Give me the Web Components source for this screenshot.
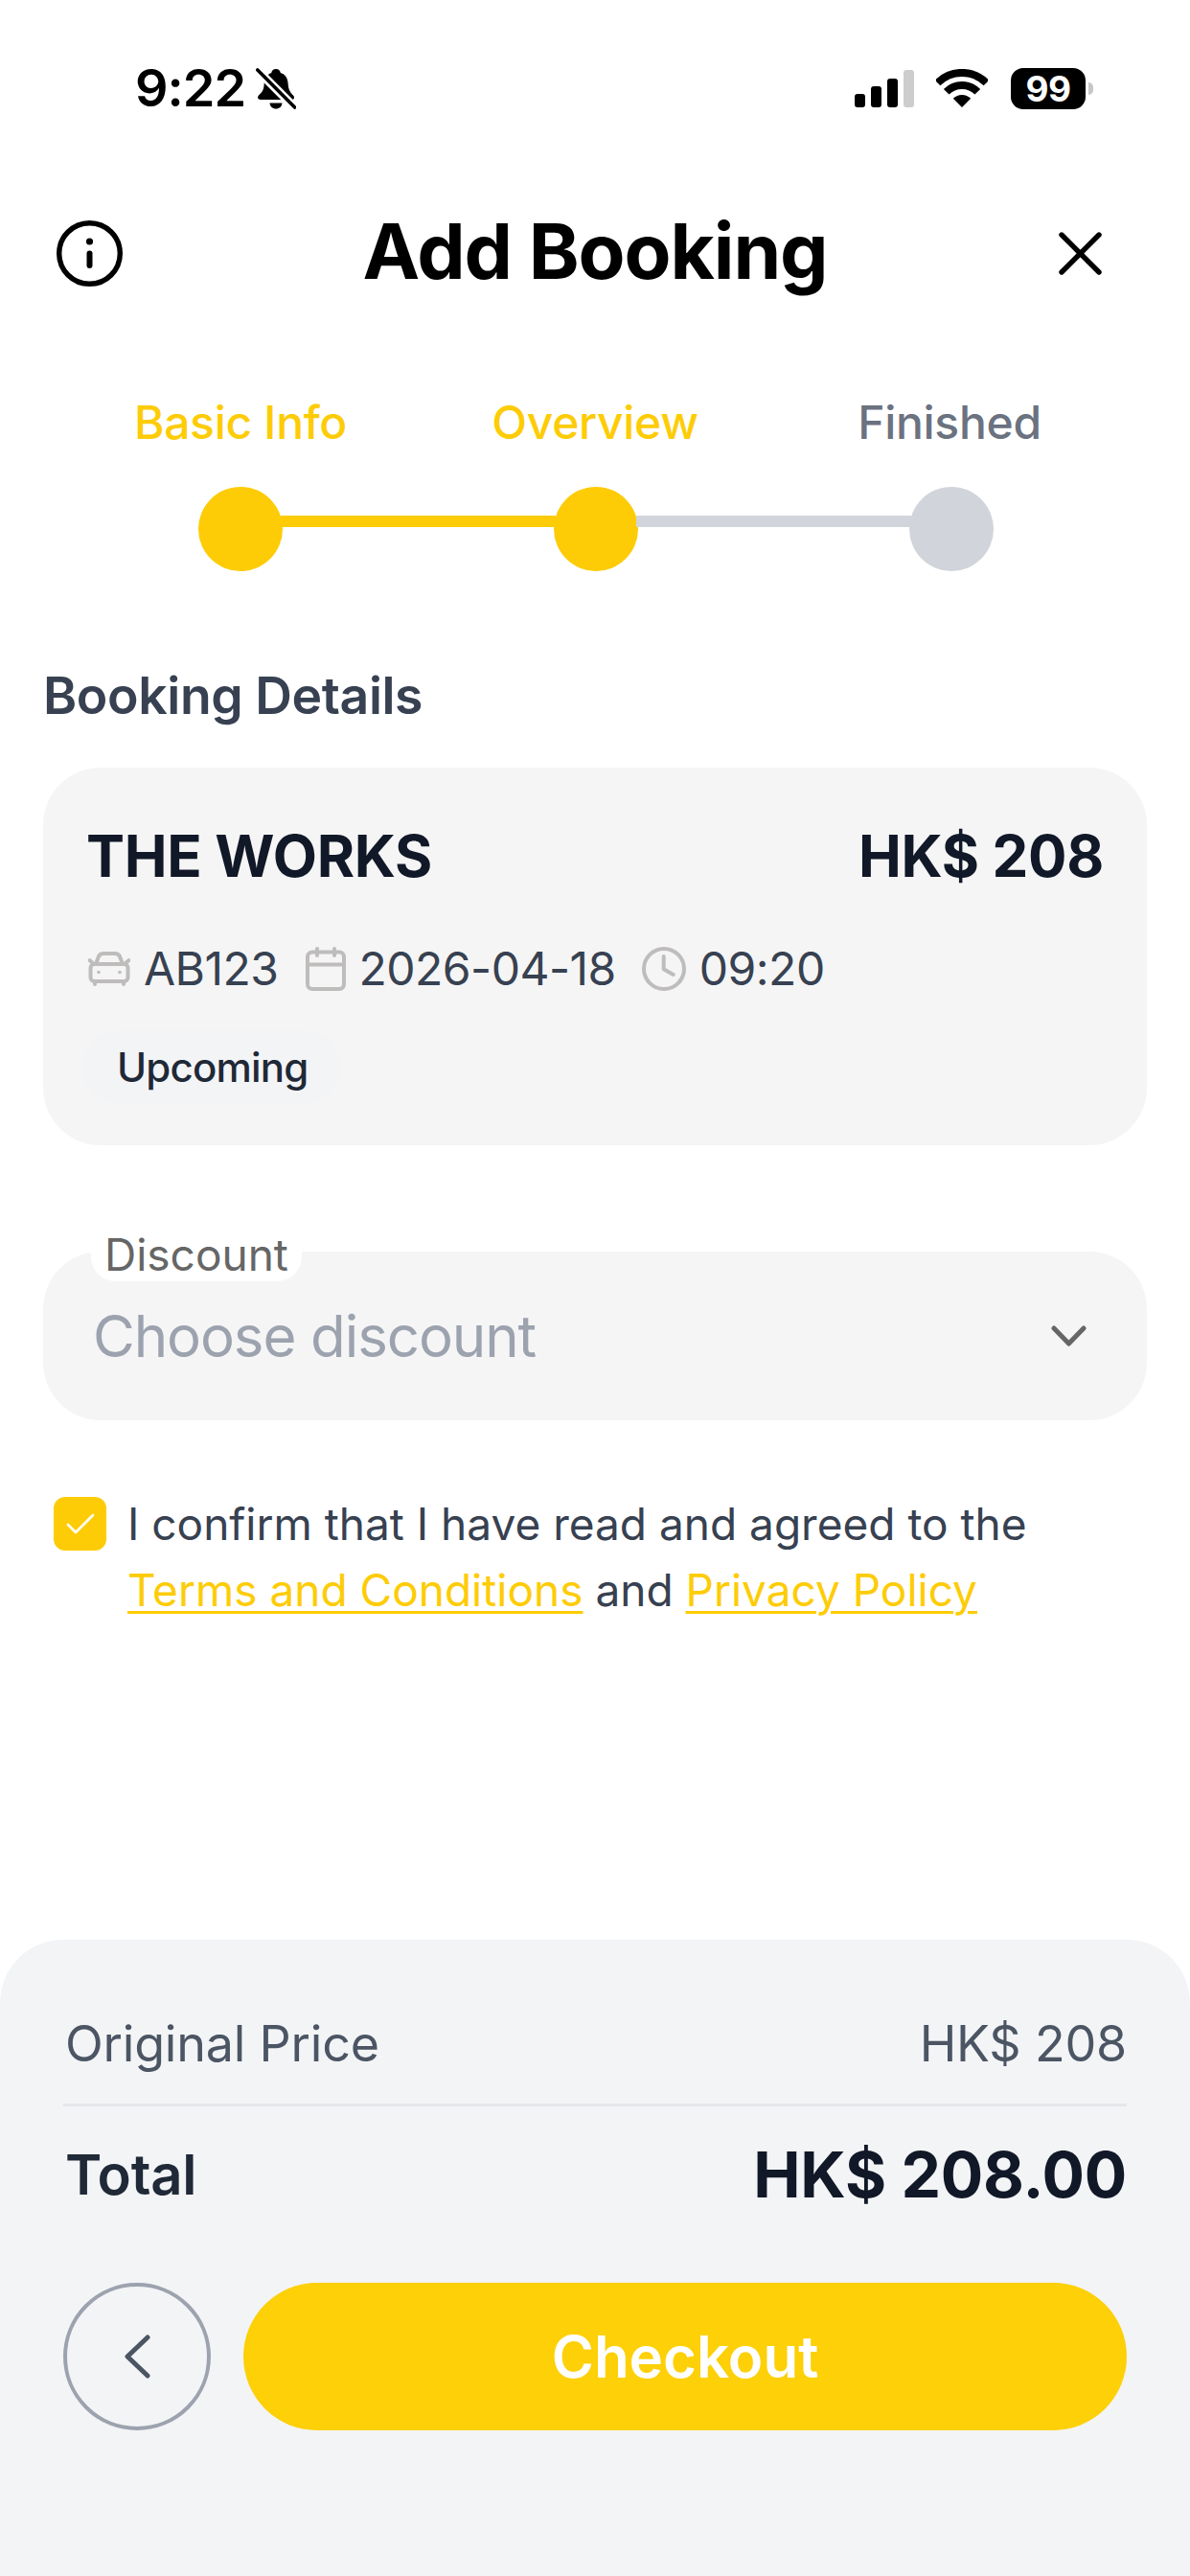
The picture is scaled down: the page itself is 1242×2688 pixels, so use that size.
<!DOCTYPE html>
<html lang="en"><head><meta charset="utf-8"><title>Add Booking</title>
<style>
html,body{margin:0;padding:0;background:#fff}
body{font-family:Inter,"Liberation Sans",sans-serif;-webkit-font-smoothing:antialiased}
</style></head><body>
<app-screen>
  <status-bar></status-bar>
  <nav-header>Add Booking</nav-header>
  <step-progress></step-progress>
  <section-title>Booking Details</section-title>
  <booking-card></booking-card>
  <select-field label="Discount" placeholder="Choose discount"></select-field>
  <agree-row></agree-row>
  <price-footer></price-footer>
</app-screen>
<script>
function def(name, html){
  customElements.define(name, class extends HTMLElement{
    constructor(){super();this.attachShadow({mode:'open'}).innerHTML=typeof html==='function'?html(this):html;}
    connectedCallback(){
      if(typeof html==='function'){this.shadowRoot.innerHTML=html(this);}
    }
  });
}
def('app-screen',`<style>:host{display:flex;flex-direction:column;width:1242px;height:2688px;overflow:hidden;background:#fff}</style><slot></slot>`);

def('status-bar',`<style>
:host{display:flex;align-items:center;height:184px;padding:0 101px 0 141px;box-sizing:border-box;justify-content:space-between;color:#000}
.l,.r{display:flex;align-items:center}
.t{font:600 54px/60px Inter,sans-serif;letter-spacing:-1px;margin-right:11px}
.sig{display:flex;align-items:flex-end;gap:6px;height:39px;margin-right:23px}
.sig i{display:block;width:11px;background:#000;border-radius:3px}
.bat{width:78px;height:43px;background:#000;border-radius:13px;color:#fff;font:700 37px/43px Inter,sans-serif;text-align:center;letter-spacing:-.5px;margin-left:24px}
.nub{width:5px;height:13px;background:#c6c6c6;border-radius:0 6px 6px 0;margin-left:3px}
svg{display:block}
</style>
<div class="l"><span class="t">9:22</span>
<svg width="42" height="43" viewBox="0 0 42 43"><path d="M21 1c3 0 4.500 2 4.800 4 5 1.500 7.500 5.500 7.800 11 .3 6 2 9 5.400 12.500 1.800 2 1.300 4.500-1.500 4.500H5c-3 0-3.800-2.500-1.800-4.700C7 25 8.500 22 8.700 16 9 11 11.500 7 16.300 5c.2-2 1.700-4 4.700-4z"/><path d="M14.500 36.500h13c-.3 3.800-3 6-6.500 6s-6.200-2.200-6.500-6z"/><path d="M1 1.500 41 41.500" stroke="#fff" stroke-width="9"/><path d="M1.800 2 40.600 41" stroke="#000" stroke-width="3.600" stroke-linecap="round"/></svg></div>
<div class="r"><div class="sig"><i style="height:14px"></i><i style="height:22px"></i><i style="height:30px"></i><i style="height:39px;background:#cdcdcd"></i></div>
<svg width="54" height="40" viewBox="0 0 54 40" style="margin-bottom:1px"><path d="M1.500 14.500A36 36 0 0 1 52.500 14.500M10.700 23.700A23 23 0 0 1 43.300 23.700" fill="none" stroke="#000" stroke-width="8"/><path d="M27 40 17.800 30.800A13 13 0 0 1 36.200 30.800Z"/></svg>
<span class="bat">99</span><span class="nub"></span></div>`);

def('nav-header',`<style>
:host{display:grid;grid-template-columns:1fr auto 1fr;align-items:center;height:100px;padding:0 59px;margin-top:30px;color:#000}
.h{font:700 80px/96px Inter,sans-serif;letter-spacing:-1.1px;padding-bottom:4px}
svg{display:block}
.x{justify-self:end;margin-right:33px}
</style>
<svg width="69" height="69" viewBox="0 0 69 69" fill="none" stroke="#000"><circle cx="34.500" cy="34.500" r="31.800" stroke-width="5.400"/><circle cx="34.500" cy="22" r="3.600" fill="#000" stroke="none"/><path d="M34.500 34.500V47" stroke-width="6" stroke-linecap="round"/></svg>
<span class="h"><slot></slot></span>
<svg class="x" width="45" height="45" viewBox="0 0 45 45" fill="none" stroke="#000" stroke-width="5.400" stroke-linecap="round"><path d="M3 3 42 42M42 3 3 42"/></svg>`);

def('step-progress',`<style>
:host{display:block;padding:0 66px;margin-top:98px}
.labels{display:grid;grid-template-columns:repeat(3,1fr);text-align:center;font:500 48px/58px Inter,sans-serif;letter-spacing:-.3px;color:#fdcc06}
.labels .off{color:#6b7280}
.track{display:flex;margin:38px 139px 0 141px}
.dot{width:88px;height:88px;border-radius:50%;background:#fdcc06;flex:none}
.bar{flex:1;height:12px;margin-top:30px;background:#fdcc06;margin-inline:-2px}
.off2{background:#d1d5db}
</style>
<div class="labels"><span>Basic Info</span><span>Overview</span><span class="off">Finished</span></div>
<div class="track"><span class="dot"></span><span class="bar"></span><span class="dot"></span><span class="bar off2"></span><span class="dot off2"></span></div>`);

def('section-title',`<style>:host{display:block;margin:98px 0 0 45px;font:600 53.500px/64px Inter,sans-serif;letter-spacing:-.4px;color:#374151}</style><slot></slot>`);

def('booking-card',`<style>
:host{display:block;margin:43px 45px 0;padding:56px 45px 43px 45px;background:#f5f5f5;border-radius:60px;color:#111827}
.top{display:flex;justify-content:space-between;font:700 60px/72px Inter,sans-serif;letter-spacing:-.3px;color:#111827}
.meta{display:flex;align-items:center;margin-top:53px;font:400 48px/58px Inter,sans-serif;letter-spacing:-.5px;color:#374151;height:58px;padding-left:2px}
.meta svg{display:block;flex:none}
.meta span{margin:0 26px 0 14px}
.meta .d{margin:0 27px 0 13px}
.meta .e{margin:0 0 0 14px}
.meta .a{margin:0 29px 0 14px}
.badge{display:inline-block;margin-top:35px;padding:0 35px 0 36px;height:77px;font:500 42px/77px Inter,sans-serif;letter-spacing:-.8px;color:#1f2937;background:#f3f4f6;border-radius:38px;margin-left:-4px}
</style>
<div class="top"><span>THE WORKS</span><span>HK$ 208</span></div>
<div class="meta">
<svg width="44" height="36" viewBox="0 0 44 36" fill="none" stroke="#bfbcbc" stroke-width="4" stroke-linejoin="round" stroke-linecap="round"><path d="M8 13 11 5C12 3 13.500 2 16 2H28C30.500 2 32 3 33 5L36 13"/><rect x="2.500" y="13" width="39" height="18" rx="4"/><path d="M7 31v3M37 31v3M1.500 9 6 13M42.500 9 38 13"/><circle cx="11" cy="21.500" r="1.800" fill="#bfbcbc" stroke="none"/><circle cx="33" cy="21.500" r="1.800" fill="#bfbcbc" stroke="none"/></svg>
<span class="a">AB123</span>
<svg width="42" height="46" viewBox="0 0 42 46" fill="none" stroke="#bfbcbc" stroke-width="4" stroke-linecap="round"><rect x="2" y="5.500" width="38" height="38.500" rx="5"/><path d="M2 18.500H40M12 2V9M30 2V9"/></svg>
<span class="d">2026-04-18</span>
<svg width="46" height="46" viewBox="0 0 46 46" fill="none" stroke="#bfbcbc" stroke-width="4" stroke-linecap="round" stroke-linejoin="round"><circle cx="23" cy="23" r="21"/><path d="M22.700 10V23.300L32.700 29"/></svg>
<span class="e">09:20</span>
</div>
<div class="badge">Upcoming</div>`);

def('select-field',(el)=>`<style>
:host{display:block;position:relative;margin:111px 45px 0;height:176px;background:#f5f5f5;border-radius:60px}
.lab{position:absolute;left:50px;top:-22px;height:53px;padding:0 14px;background:#fff;border-radius:0 0 26px 26px;font:400 46px/50px Inter,sans-serif;color:#666}
.row{display:flex;align-items:center;justify-content:space-between;height:100%;padding:0 63px 0 52px;box-sizing:border-box;font:400 60px/72px Inter,sans-serif;letter-spacing:-1.1px;color:#9ca3af}
svg{display:block}
</style>
<span class="lab">${el.getAttribute('label')||''}</span>
<div class="row"><span>${el.getAttribute('placeholder')||''}</span>
<svg width="37" height="22" viewBox="0 0 37 22" fill="none" stroke="#666" stroke-width="5" stroke-linecap="round" stroke-linejoin="round"><path d="M3 3 18.500 19 34 3"/></svg></div>`);

def('agree-row',`<style>
:host{display:flex;margin:80px 45px 0 56px;font:400 46px/69px Inter,sans-serif;color:#374151}
.box{width:55px;height:56px;flex:none;margin:0 22px 0 0;background:#fdcc06;border-radius:12px;display:flex;align-items:center;justify-content:center}
.txt{margin-top:-6px}
a{color:#fdcc06;text-decoration:underline;text-underline-offset:5px;text-decoration-thickness:3px}
svg{display:block}
</style>
<span class="box"><svg width="30" height="22" viewBox="0 0 30 22" fill="none" stroke="#fff" stroke-width="2.600" stroke-linecap="round" stroke-linejoin="round"><path d="M2 12 10 20 28 2"/></svg></span>
<div class="txt">I confirm that I have read and agreed to the<br><a>Terms and Conditions</a> and <a>Privacy Policy</a></div>`);

def('price-footer',`<style>
:host{display:block;margin-top:auto;height:664px;box-sizing:border-box;padding:78px 66px 0;background:#f3f4f6;border-radius:66px 66px 0 0}
.row{display:flex;justify-content:space-between;align-items:center}
.o{height:93px;font:400 52px/62px Inter,sans-serif;letter-spacing:-.2px;color:#4b5563;border-bottom:3px solid #e5e7eb;align-items:flex-start;padding-left:2px}
.tot{height:92px;margin-top:25px;font:600 58px/92px Inter,sans-serif;letter-spacing:-.2px;color:#1f2937;padding-left:2px}
.tot b{font:700 66px/92px Inter,sans-serif;color:#111827}
.act{display:flex;gap:34px;margin-top:67px}
.back{width:154px;height:154px;box-sizing:border-box;border:4px solid #9ca3af;border-radius:50%;display:flex;align-items:center;justify-content:center;flex:none}
.go{flex:1;height:154px;border-radius:77px;background:#fdd007;color:#fff;font:600 60px/154px Inter,sans-serif;text-align:center}
svg{display:block}
</style>
<div class="row o"><span>Original Price</span><span>HK$ 208</span></div>
<div class="row tot"><span>Total</span><b>HK$ 208.00</b></div>
<div class="act"><span class="back"><svg width="28" height="46" viewBox="0 0 28 46" fill="none" stroke="#4b5563" stroke-width="5" stroke-linecap="round" stroke-linejoin="round"><path d="M25 3 4 23 25 43"/></svg></span><span class="go">Checkout</span></div>`);
</script>
</body></html>
